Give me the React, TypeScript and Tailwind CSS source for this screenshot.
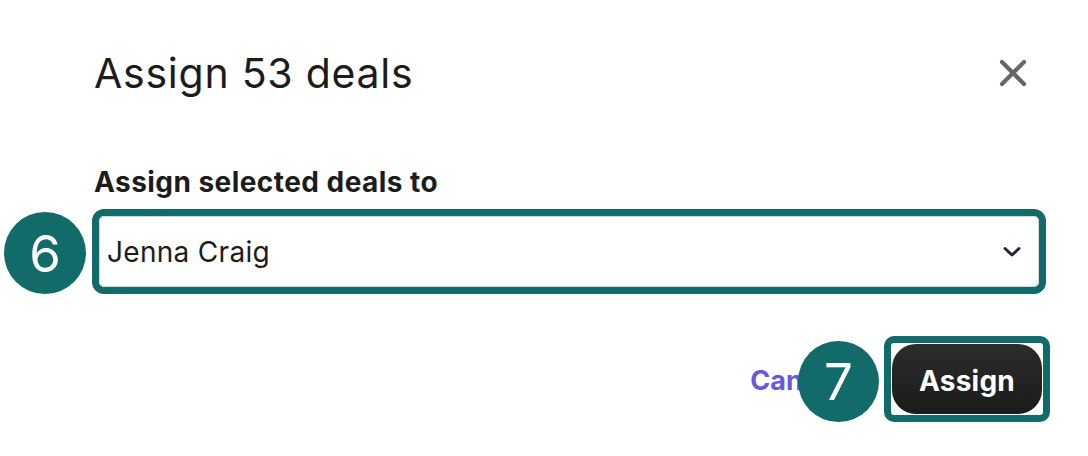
import React from "react";

export default function App() {
  return (
    <div className="relative w-[1088px] h-[456px] bg-white overflow-hidden font-['Inter',_sans-serif] text-[#1c1c1c]">
      <div className="pl-[92px] pr-[42px] pt-[49px]">
        <div className="flex items-center justify-between h-[48px] pl-[2px] pr-[18px]">
          <h2 className="text-[41px] leading-[48px] font-normal tracking-[0.75px]">Assign 53 deals</h2>
          <button className="w-[30px] h-[30px] flex items-center justify-center">
            <svg width="28" height="28" viewBox="0 0 28 28" fill="none">
              <path d="M3 3 L25 25 M25 3 L3 25" stroke="#666666" strokeWidth="4.2" strokeLinecap="round" />
            </svg>
          </button>
        </div>
        <div className="mt-[69px] pl-[2px] text-[28px] leading-[32px] font-bold tracking-[0.45px]">Assign selected deals to</div>
        <div className="mt-[11px] h-[85px] rounded-[12px] border-[7px] border-[#136b69]">
          <div className="h-full rounded-[6px] border border-[#d4d4d4] bg-white flex items-center justify-between pl-[7px] pr-[16px]">
            <span className="text-[28px] leading-[32px] tracking-[0.3px]">Jenna Craig</span>
            <svg width="20" height="12" viewBox="0 0 20 12" fill="none">
              <path d="M3 2.5 L10 9 L17 2.5" stroke="#1f2937" strokeWidth="3" strokeLinecap="round" strokeLinejoin="round" />
            </svg>
          </div>
        </div>
        <div className="mt-[42px] -mr-[4px] flex items-center justify-end gap-[42px]">
          <span className="text-[27px] font-bold text-[#6658e1] mt-[4px]">Cancel</span>
          <div className="w-[166px] h-[86px] rounded-[10px] border-[7px] border-[#136b69] bg-white p-[1px]">
            <div className="h-full rounded-[24px] bg-gradient-to-b from-[#2c2c2c] to-[#1b1b1b] flex items-center justify-center pt-[3px]">
              <span className="text-[28px] font-bold text-white tracking-[0.2px]">Assign</span>
            </div>
          </div>
        </div>
      </div>
      <div className="absolute left-[4px] top-[212px] w-[82px] h-[82px] rounded-full bg-[#136b69] flex items-center justify-center text-white text-[51px] leading-none">6</div>
      <div className="absolute left-[798px] top-[341px] w-[81px] h-[81px] rounded-full bg-[#136b69] flex items-center justify-center text-white text-[51px] leading-none">7</div>
    </div>
  );
}
